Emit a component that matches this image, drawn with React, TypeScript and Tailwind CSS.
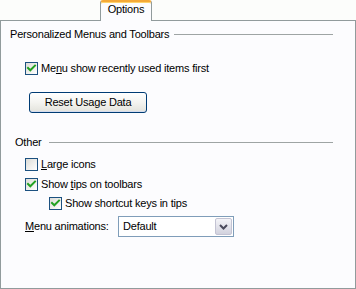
import React from "react";

function Box({ checked }: { checked: boolean }) {
  return (
    <span className="w-[13px] h-[13px] shrink-0 border border-[#1c5180] bg-linear-to-br from-[#dcdcd7] to-white flex items-center justify-center">
      {checked && (
        <svg width="11" height="11" viewBox="0 0 11 11">
          <path d="M2 5 L4.3 7.3 L9 2.6" stroke="#21a121" strokeWidth="2" fill="none" strokeLinecap="square" />
        </svg>
      )}
    </span>
  );
}

function Check({
  checked,
  children,
  indent,
  className,
}: {
  checked: boolean;
  children: React.ReactNode;
  indent: string;
  className: string;
}) {
  return (
    <div className={`flex items-center gap-[3px] ${indent} ${className}`}>
      <Box checked={checked} />
      <span className="whitespace-nowrap">{children}</span>
    </div>
  );
}

export default function App() {
  return (
    <div className="w-[356px] h-[289px] bg-[#fcfdfb] flex flex-col font-['Liberation_Sans',Arial,sans-serif] text-[11px] leading-[13px] text-black tracking-[-0.2px]">
      <div className="h-[20px] flex pl-[100px] shrink-0">
        <div className="relative z-10 w-[52px] h-[21px] border-x border-t-2 border-x-[#919b9c] border-t-[#f4a938] rounded-t-[3px] bg-[#fcfcfe] shadow-[inset_0_1px_0_#ffd36b] flex justify-center pt-[1px]">
          Options
        </div>
      </div>
      <div className="flex-1 border border-[#919b9c] bg-[#fcfcfe] flex flex-col">
        <div className="mt-[7px] flex items-center pl-[9px] pr-[22px]">
          <span className="whitespace-nowrap">Personalized Menus and Toolbars</span>
          <div className="ml-[5px] flex-1 h-px bg-[#9ea4a4]" />
        </div>

        <Check checked indent="pl-[24px]" className="mt-[21px]">
          Me<span className="underline">n</span>u show recently used items first
        </Check>

        <div className="mt-[17px] ml-[28px] w-[118px] h-[21px] rounded-[3px] border border-[#003c74] bg-linear-to-b from-white via-[#f4f4f0] to-[#e3e3dc] shadow-[inset_0_-1px_0_#d4dcee,inset_0_1px_0_#ffffff] flex items-center justify-center">
          Reset Usage Data
        </div>

        <div className="mt-[23px] flex items-center pl-[14px] pr-[22px]">
          <span>Other</span>
          <div className="ml-[7px] flex-1 h-px bg-[#9ea4a4]" />
        </div>

        <Check checked={false} indent="pl-[24px]" className="mt-[9px]">
          <span className="underline">L</span>arge icons
        </Check>
        <Check checked indent="pl-[24px]" className="mt-[7px]">
          Show <span className="underline">t</span>ips on toolbars
        </Check>
        <Check checked indent="pl-[48px]" className="mt-[6px]">
          Show shortcut keys in tips
        </Check>

        <div className="mt-[6px] flex items-center pl-[24px]">
          <span className="w-[93px] whitespace-nowrap">
            <span className="underline">M</span>enu animations:
          </span>
          <div className="w-[116px] h-[21px] border border-[#7f9db9] bg-white flex items-center p-px">
            <span className="flex-1 pl-[3px]">Default</span>
            <div className="w-[17px] h-[17px] rounded-[2px] border border-[#c3c3d3] bg-linear-to-b from-[#f4f4f8] to-[#d2d2de] flex items-center justify-center">
              <svg width="9" height="6" viewBox="0 0 9 6">
                <path d="M1 1 L4.5 4.5 L8 1" stroke="#4a4a5c" strokeWidth="2" fill="none" />
              </svg>
            </div>
          </div>
        </div>
      </div>
    </div>
  );
}
